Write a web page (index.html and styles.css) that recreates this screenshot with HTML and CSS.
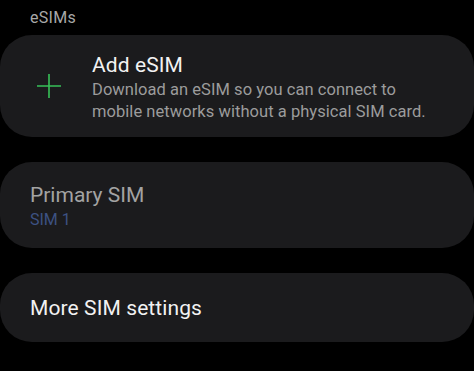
FILE: index.html
```html
<!DOCTYPE html>
<html>
<head>
<meta charset="utf-8">
<link rel="stylesheet" href="styles.css">
</head>
<body>
<div class="page">
  <div class="section-title">eSIMs</div>
  <div class="card card-add">
    <div class="icon">
      <svg width="24" height="24" viewBox="0 0 24 24"><path d="M12 0V24M0 12H24" stroke="#37c158" stroke-width="1.6" fill="none"/></svg>
    </div>
    <div class="texts">
      <div class="title">Add eSIM</div>
      <div class="desc">Download an eSIM so you can connect to mobile networks without a physical SIM card.</div>
    </div>
  </div>
  <div class="card card-primary">
    <div class="title dim">Primary SIM</div>
    <div class="sub">SIM 1</div>
  </div>
  <div class="card card-more">
    <div class="title">More SIM settings</div>
  </div>
</div>
</body>
</html>
```
FILE: styles.css
```css
html, body {
  margin: 0;
  padding: 0;
  background: #000;
}
.page {
  width: 474px;
  height: 371px;
  overflow: hidden;
  font-family: Roboto, "Noto Sans", sans-serif;
  display: flex;
  flex-direction: column;
}
.section-title {
  color: #a8a8a8;
  font-size: 16px;
  letter-spacing: 0.3px;
  padding: 8px 0 0 30px;
  height: 27px;
  box-sizing: border-box;
}
.card {
  background: #1b1b1d;
  border-radius: 32px;
  box-sizing: border-box;
}
.card-add {
  margin-top: 8px;
  height: 102px;
  display: flex;
  align-items: center;
  padding-left: 37px;
}
.icon {
  width: 24px;
  height: 24px;
  margin-right: 31px;
  margin-top: 0;
}
.icon svg { display: block; }
.texts {
  padding-top: 3px;
}
.title {
  color: #f2f2f2;
  font-size: 21px;
  line-height: 26px;
  letter-spacing: 0.1px;
}
.title.dim { color: #a3a3a3; letter-spacing: 0; }
.desc {
  color: #9c9c9c;
  font-size: 16.5px;
  line-height: 22px;
  letter-spacing: 0.05px;
  margin-top: 1px;
  width: 345px;
}
.card-primary {
  margin-top: 25px;
  height: 86px;
  padding: 20px 30px 0;
}
.sub {
  color: #3d5283;
  font-size: 16px;
  line-height: 20px;
  margin-top: 2px;
}
.card-more {
  margin-top: 25px;
  height: 69px;
  padding: 0 30px;
  display: flex;
  align-items: center;
}
```
